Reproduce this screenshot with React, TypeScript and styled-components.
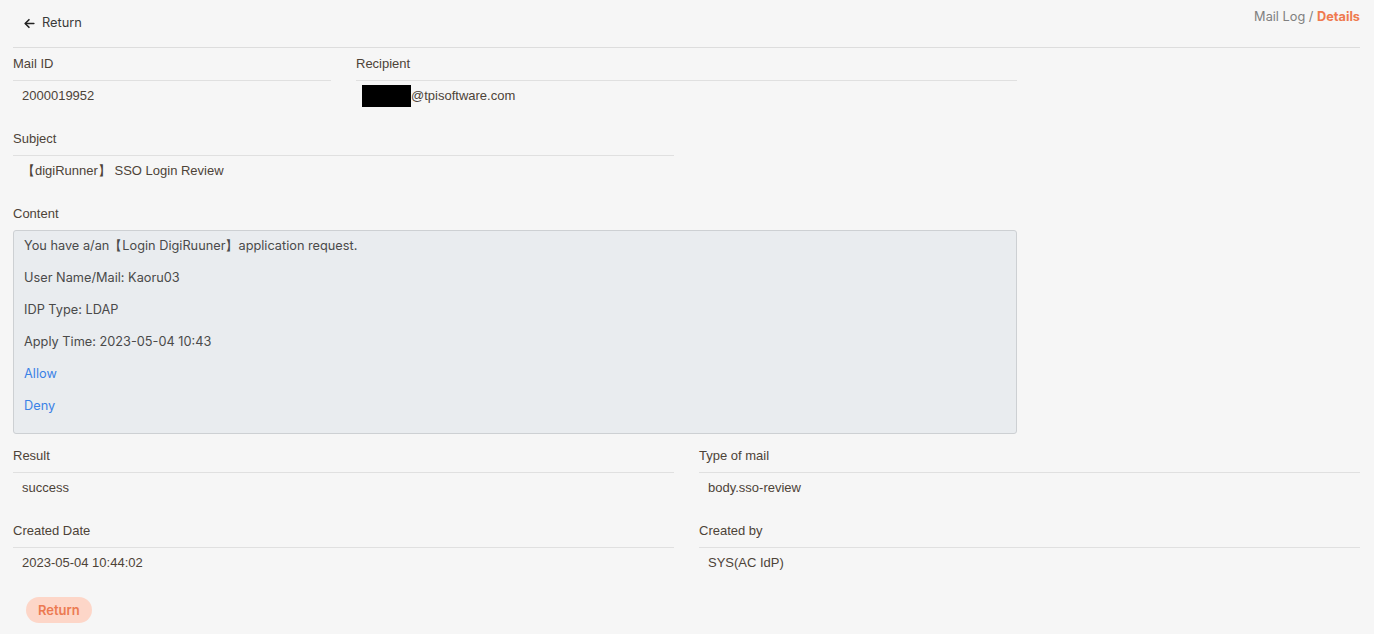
import React from "react";
import styled, { createGlobalStyle } from "styled-components";

const Global = createGlobalStyle`
  html, body { margin: 0; padding: 0; background: #f6f6f6; }
  body { font-family: "Liberation Sans", Arial, sans-serif; color: #4a4540; }
  * { box-sizing: border-box; }
`;

const Page = styled.div`
  padding: 0 14px 0 13px;
  min-height: 634px;
`;

const Header = styled.div`
  display: flex;
  justify-content: space-between;
  align-items: flex-start;
  height: 48px;
  border-bottom: 1px solid #dddddd;
`;

const BackLink = styled.a`
  display: flex;
  align-items: center;
  gap: 6px;
  margin: 15px 0 0 10px;
  font-family: Inter, "Liberation Sans", sans-serif;
  font-size: 12.8px;
  color: #3a3a3a;
  cursor: pointer;
  line-height: 16px;
`;

const Crumbs = styled.div`
  margin-top: 9px;
  font-family: Inter, "Liberation Sans", sans-serif;
  font-size: 12.75px;
  line-height: 16px;
  color: #808080;
`;

const Current = styled.span`
  color: #ef7a4f;
  font-weight: 700;
`;

const Grid = styled.div`
  display: grid;
  grid-template-columns: repeat(4, 318px);
  column-gap: 25px;
  row-gap: 11px;
  padding-top: 6px;
`;

const Field = styled.div<{ $span: number; $start?: number; $extra?: number }>`
  grid-column: ${(p) => (p.$start ? `${p.$start} / span ${p.$span}` : `span ${p.$span}`)};
  margin-bottom: ${(p) => p.$extra ?? 0}px;
`;

const Label = styled.div`
  font-size: 13px;
  line-height: 20px;
  color: #4d4338;
  margin-bottom: 6px;
`;

const Value = styled.div`
  border-top: 1px solid #e0e0e0;
  padding: 6px 9px 14px;
  font-size: 13px;
  line-height: 16px;
  height: 38px;
  color: #4d4338;
  display: flex;
  align-items: center;
`;

const Redact = styled.span`
  display: inline-block;
  width: 49px;
  height: 22px;
  background: #000;
  margin-left: -3px;
`;

const ContentBox = styled.div`
  background: #e9ecef;
  border: 1px solid #cdd0d3;
  border-radius: 3px;
  padding: 7px 10px 3px;
  font-family: Inter, "Liberation Sans", sans-serif;
  font-size: 12.75px;
  color: #4a4a4a;
`;

const Para = styled.p`
  margin: 0 0 16px;
  line-height: 16px;
`;

const LinkText = styled.a`
  color: #3b82e6;
  text-decoration: none;
  cursor: pointer;
`;

const Footer = styled.div`
  padding: 12px 0 0 13px;
`;

const PillButton = styled.button`
  height: 26px;
  padding: 0 12px;
  border: none;
  border-radius: 13px;
  background: #fdd6c8;
  color: #ec7a52;
  font-family: Inter, "Liberation Sans", sans-serif;
  font-weight: 600;
  font-size: 13px;
  cursor: pointer;
`;

const ArrowLeft = () => (
  <svg width="13" height="13" viewBox="0 0 24 24" fill="none" stroke="#222" strokeWidth="3" strokeLinecap="round" strokeLinejoin="round">
    <path d="M20 12H5" />
    <path d="M11 5l-7 7 7 7" />
  </svg>
);

export default function App() {
  return (
    <>
      <Global />
      <Page>
        <Header>
          <BackLink>
            <ArrowLeft />
            Return
          </BackLink>
          <Crumbs>
            Mail Log / <Current>Details</Current>
          </Crumbs>
        </Header>
        <Grid>
          <Field $span={1}>
            <Label>Mail ID</Label>
            <Value>2000019952</Value>
          </Field>
          <Field $span={2}>
            <Label>Recipient</Label>
            <Value>
              <Redact />@tpisoftware.com
            </Value>
          </Field>
          <Field $span={2} $start={1}>
            <Label>Subject</Label>
            <Value>【digiRunner】 SSO Login Review</Value>
          </Field>
          <Field $span={3} $start={1} $extra={1}>
            <Label>Content</Label>
            <ContentBox>
              <Para>You have a/an【Login DigiRuuner】application request.</Para>
              <Para>User Name/Mail: Kaoru03</Para>
              <Para>IDP Type: LDAP</Para>
              <Para>Apply Time: 2023-05-04 10:43</Para>
              <Para>
                <LinkText>Allow</LinkText>
              </Para>
              <Para>
                <LinkText>Deny</LinkText>
              </Para>
            </ContentBox>
          </Field>
          <Field $span={2} $start={1}>
            <Label>Result</Label>
            <Value>success</Value>
          </Field>
          <Field $span={2}>
            <Label>Type of mail</Label>
            <Value>body.sso-review</Value>
          </Field>
          <Field $span={2} $start={1}>
            <Label>Created Date</Label>
            <Value>2023-05-04 10:44:02</Value>
          </Field>
          <Field $span={2}>
            <Label>Created by</Label>
            <Value>SYS(AC IdP)</Value>
          </Field>
        </Grid>
        <Footer>
          <PillButton>Return</PillButton>
        </Footer>
      </Page>
    </>
  );
}
